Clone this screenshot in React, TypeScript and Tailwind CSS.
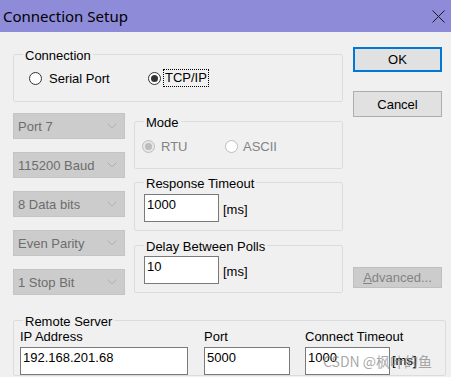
import type { ReactNode } from "react";

const font = "font-['Liberation_Sans',Arial,sans-serif]";

function GroupBox({ label, className = "", children }: { label: string; className?: string; children: ReactNode }) {
  return (
    <fieldset className={`min-w-0 rounded-[2px] border border-[#dcdcdc] ${className}`}>
      <legend className="ml-[9px] px-[2px] pt-[2px] text-[13px] leading-[15px]">{label}</legend>
      {children}
    </fieldset>
  );
}

function Radio({ checked = false, disabled = false }: { checked?: boolean; disabled?: boolean }) {
  const stroke = disabled ? "#bcbcbc" : "#333333";
  return (
    <svg width="13" height="13" viewBox="0 0 13 13" className="shrink-0">
      <circle cx="6.5" cy="6.5" r="6" fill={disabled && checked ? "#e6e6e6" : "#ffffff"} stroke={stroke} />
      {checked ? <circle cx="6.5" cy="6.5" r="3.5" fill={disabled ? "#bcbcbc" : "#333333"} /> : null}
    </svg>
  );
}

function Combo({ text }: { text: string }) {
  return (
    <div className="flex h-[26px] items-center justify-between border border-[#c4c4c4] bg-[#cccccc] pl-[4px] pr-[7px] text-[13px] leading-[15px] text-[#6d6d6d]">
      <span>{text}</span>
      <svg width="10" height="6" viewBox="0 0 10 6">
        <path d="M0.5 0.5 L5 5 L9.5 0.5" fill="none" stroke="#b0b0b0" />
      </svg>
    </div>
  );
}

function Field({ value, width }: { value: string; width: string }) {
  return (
    <div className={`h-[28px] shrink-0 border border-[#7a7a7a] bg-white pl-[2px] pt-[2px] text-[13px] leading-[15px] ${width}`}>
      {value}
    </div>
  );
}

function MsField({ value }: { value: string }) {
  return (
    <div className="ml-[9px] flex items-start">
      <Field value={value} width="w-[75px]" />
      <span className="ml-[4px] mt-[8px] text-[13px] leading-[15px]">[ms]</span>
    </div>
  );
}

export default function App() {
  return (
    <div className={`relative h-[377px] w-[451px] overflow-hidden bg-[#f0f0f0] text-black ${font}`}>
      <div className="flex h-[32px] items-center justify-between bg-[#8e8bd8] pl-[3px] pr-[6px]">
        <span className="font-['Noto_Sans',sans-serif] text-[15px] leading-[20px]">Connection Setup</span>
        <svg width="13" height="13" viewBox="0 0 13 13">
          <path d="M0.5 0.5 L12.5 12.5 M12.5 0.5 L0.5 12.5" stroke="#1a1a1a" strokeWidth="1" />
        </svg>
      </div>

      <div className="pl-[13px] pr-[5px] pt-[14px]">
        <div className="flex gap-[10px]">
          <div className="w-[330px]">
            <GroupBox label="Connection">
              <div className="mb-[14px] mt-[6px] flex h-[18px] items-center pl-[15px] text-[13px] leading-[15px]">
                <div className="flex w-[119px] items-center gap-[7px]">
                  <Radio />
                  <span>Serial Port</span>
                </div>
                <div className="flex items-center gap-[2px]">
                  <Radio checked />
                  <span className="border border-dotted border-black px-[1px] pb-[1px]">TCP/IP</span>
                </div>
              </div>
            </GroupBox>

            <div className="mt-[11px] flex gap-[9px]">
              <div className="flex w-[112px] flex-col gap-[13px]">
                <Combo text="Port 7" />
                <Combo text="115200 Baud" />
                <Combo text="8 Data bits" />
                <Combo text="Even Parity" />
                <Combo text="1 Stop Bit" />
              </div>

              <div className="w-[209px]">
                <GroupBox label="Mode">
                  <div className="mb-[13px] mt-[7px] flex h-[18px] items-center pl-[7px] text-[13px] leading-[15px] text-[#838383]">
                    <div className="flex w-[83px] items-center gap-[6px]">
                      <Radio checked disabled />
                      <span>RTU</span>
                    </div>
                    <div className="flex items-center gap-[5px]">
                      <Radio disabled />
                      <span>ASCII</span>
                    </div>
                  </div>
                </GroupBox>

                <GroupBox label="Response Timeout" className="mt-[5px]">
                  <div className="mb-[8px] mt-[3px]">
                    <MsField value="1000" />
                  </div>
                </GroupBox>

                <GroupBox label="Delay Between Polls" className="mt-[6px]">
                  <div className="mb-[8px] mt-[2px]">
                    <MsField value="10" />
                  </div>
                </GroupBox>
              </div>
            </div>
          </div>

          <div className="flex w-[89px] flex-col pt-[1px] text-[13px] leading-[15px]">
            <button className="flex h-[25px] items-center justify-center border-2 border-[#0078d7] bg-[#e1e1e1]">OK</button>
            <button className="mt-[19px] flex h-[26px] items-center justify-center border border-[#adadad] bg-[#e1e1e1]">
              Cancel
            </button>
            <button className="mt-[150px] flex h-[21px] items-center justify-center border border-[#bfbfbf] bg-[#cccccc] text-[#838383]">
              <span>
                <span className="underline">A</span>dvanced...
              </span>
            </button>
          </div>
        </div>

        <GroupBox label="Remote Server" className="mt-[17px]">
          <div className="flex pl-[6px] text-[13px] leading-[15px]">
            <div className="w-[184px]">
              <div>IP Address</div>
              <div className="mt-[3px]">
                <Field value="192.168.201.68" width="w-[168px]" />
              </div>
            </div>
            <div className="w-[101px]">
              <div>Port</div>
              <div className="mt-[3px]">
                <Field value="5000" width="w-[86px]" />
              </div>
            </div>
            <div>
              <div>Connect Timeout</div>
              <div className="mt-[3px] flex items-start">
                <Field value="1000" width="w-[85px]" />
                <span className="ml-[2px] mt-[6px]">[ms]</span>
              </div>
            </div>
          </div>
        </GroupBox>
      </div>

      <div className="pointer-events-none absolute left-[323px] top-[352px] font-['Noto_Sans_CJK_SC',sans-serif] text-[14px] leading-[18px] text-[#8a8a8a]/75">
        CSDN @枫叶的鱼
      </div>
    </div>
  );
}
